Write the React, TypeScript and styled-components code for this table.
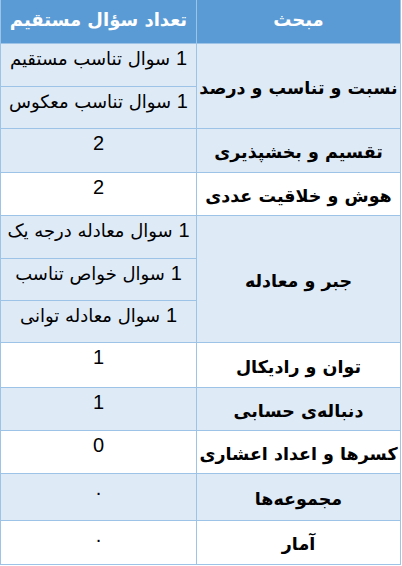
import styled, { createGlobalStyle } from 'styled-components';

const GlobalStyle = createGlobalStyle`
  html, body {
    margin: 0;
    padding: 0;
    background: #ffffff;
  }
`;

const Table = styled.table`
  direction: rtl;
  width: 400px;
  border-collapse: collapse;
  table-layout: fixed;
  font-family: "DejaVu Sans", "Liberation Sans", sans-serif;
  color: #000;
`;

const HeadRow = styled.tr`
  height: 43px;
`;

const HeadCell = styled.th<{ $w: number }>`
  box-sizing: border-box;
  width: ${p => p.$w}px;
  padding: 0 0 3px;
  background: #5b9bd5;
  color: #fff;
  font-size: 18px;
  line-height: 24px;
  font-weight: bold;
  text-align: center;
  border: 1px solid #9dc3e6;
  border-top: none;
  white-space: nowrap;
`;

const Row = styled.tr<{ $h?: number }>`
  height: ${p => p.$h ?? 43}px;
`;

const TopicCell = styled.td<{ $band: boolean }>`
  background: ${p => (p.$band ? '#deeaf6' : '#ffffff')};
  border: 1px solid #9dc3e6;
  text-align: center;
  vertical-align: middle;
  padding: 4px 0 0;
  font-size: 17.5px;
  line-height: 24px;
  font-weight: bold;
  white-space: nowrap;
`;

const CountCell = styled.td<{ $band: boolean }>`
  background: ${p => (p.$band ? '#deeaf6' : '#ffffff')};
  border: 1px solid #9dc3e6;
  text-align: center;
  vertical-align: top;
  padding: 2px 0 0;
  font-size: 18px;
  line-height: 24px;
  white-space: nowrap;
`;

const Num = styled.span`
  font-family: "Liberation Sans", Arial, sans-serif;
  font-size: 20px;
`;

type Item = { topic: string; counts: string[]; band: boolean; heights: number[] };

const items: Item[] = [
  { topic: 'نسبت و تناسب و درصد', counts: ['سوال تناسب مستقیم', 'سوال تناسب معکوس'], band: true, heights: [43, 42] },
  { topic: 'تقسیم و بخشپذیری', counts: ['2'], band: true, heights: [44] },
  { topic: 'هوش و خلاقیت عددی', counts: ['2'], band: false, heights: [43] },
  { topic: 'جبر و معادله', counts: ['سوال معادله درجه یک', 'سوال خواص تناسب', 'سوال معادله توانی'], band: true, heights: [43, 42, 42] },
  { topic: 'توان و رادیکال', counts: ['1'], band: false, heights: [45] },
  { topic: 'دنباله‌ی حسابی', counts: ['1'], band: true, heights: [43] },
  { topic: 'کسرها و اعداد اعشاری', counts: ['0'], band: false, heights: [43] },
  { topic: 'مجموعه‌ها', counts: ['.'], band: true, heights: [47] },
  { topic: 'آمار', counts: ['.'], band: false, heights: [44] },
];

const renderCount = (c: string) =>
  /^[0-9.]$/.test(c) ? <Num>{c}</Num> : (<><Num>1</Num> {c}</>);

export default function App() {
  return (
    <>
      <GlobalStyle />
      <Table>
        <thead>
          <HeadRow>
            <HeadCell $w={204}>مبحث</HeadCell>
            <HeadCell $w={196}>تعداد سؤال مستقیم</HeadCell>
          </HeadRow>
        </thead>
        <tbody>
          {items.map(item =>
            item.counts.map((c, i) => (
              <Row key={item.topic + i} $h={item.heights[i]}>
                {i === 0 && (
                  <TopicCell $band={item.band} rowSpan={item.counts.length}>
                    {item.topic}
                  </TopicCell>
                )}
                <CountCell $band={item.band}>{renderCount(c)}</CountCell>
              </Row>
            ))
          )}
        </tbody>
      </Table>
    </>
  );
}
